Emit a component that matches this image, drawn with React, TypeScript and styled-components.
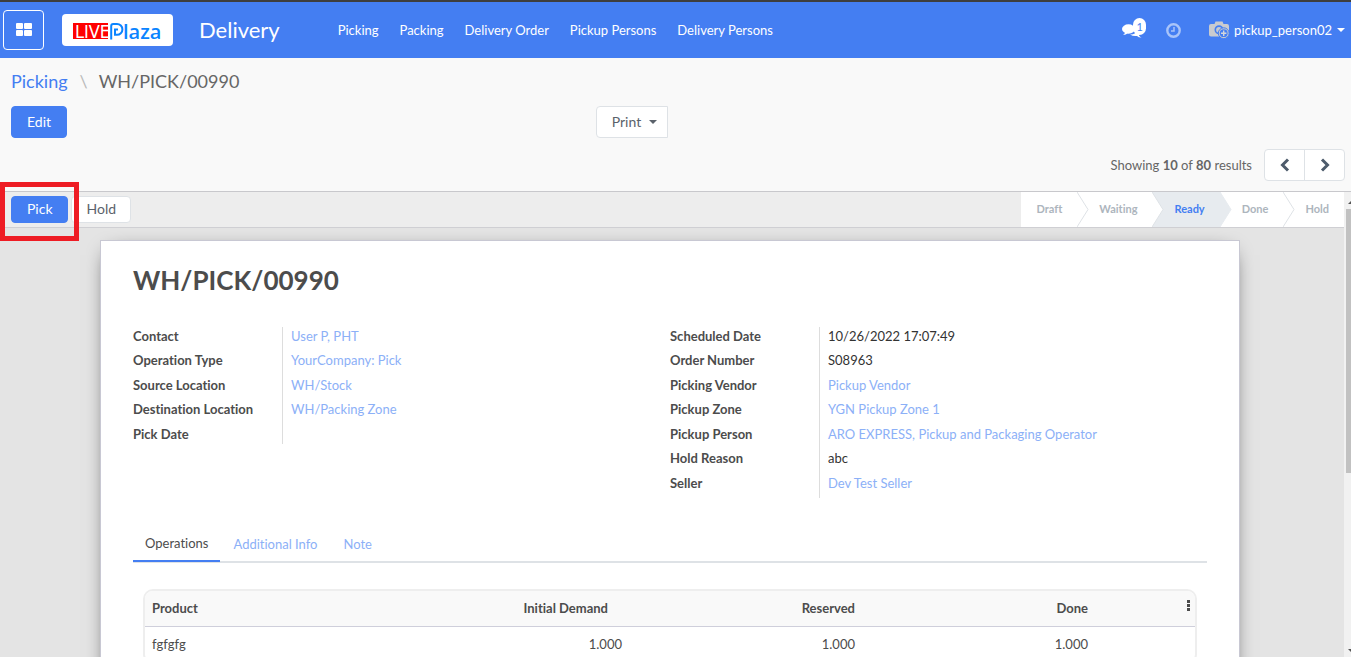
import React from "react";
import styled, { createGlobalStyle } from "styled-components";

const blue = "#447ef2";
const link = "#8cb0f7";

const Global = createGlobalStyle`
  *, *::before, *::after { box-sizing: border-box; }
  body { margin: 0; font: 13px/20px Lato, "Open Sans", sans-serif; font-variant-ligatures: none; color: #4c4c4c; background: #f9f9f9; overflow: hidden; }
  button { font: inherit; font-variant-ligatures: none; cursor: pointer; }
  a { text-decoration: none; color: inherit; }
  h1, ol, dl, dd { margin: 0; padding: 0; }
  ol { list-style: none; }
`;

const Page = styled.div`
  display: flex;
  flex-direction: column;
  height: 100vh;
`;

const Navbar = styled.header`
  display: flex;
  align-items: center;
  flex: none;
  height: 58px;
  padding: 0 6px 0 3px;
  border-top: 2px solid #3e3e3e;
  background: ${blue};
  color: #fff;
`;

const AppsButton = styled.button`
  display: flex;
  align-items: center;
  justify-content: center;
  width: 41px;
  height: 40px;
  padding: 0;
  border: 1px solid #fff;
  border-radius: 4px;
  background: transparent;
`;

const LogoLink = styled.a`
  display: flex;
  margin-left: 18px;
  border-radius: 4px;
  background: #fff;
`;

const Brand = styled.a`
  margin-left: 26px;
  font-size: 22px;
  line-height: 28px;
`;

const Menu = styled.nav`
  display: flex;
  gap: 21px;
  margin-left: 58px;
`;

const Systray = styled.div`
  display: flex;
  align-items: center;
  margin-left: auto;
`;

const TrayButton = styled.button<{ $gap?: number }>`
  display: flex;
  align-items: center;
  position: relative;
  margin: 0 0 0 ${(p) => p.$gap ?? 0}px;
  padding: 0;
  border: 0;
  background: transparent;
  color: #fff;
`;

const UserName = styled.span`
  margin-left: 4px;
`;

const Count = styled.span`
  position: absolute;
  top: -5px;
  right: 0;
  width: 13px;
  height: 17px;
  border-radius: 7px;
  background: #fff;
  color: ${blue};
  font-size: 11px;
  line-height: 17px;
  text-align: center;
`;

const Caret = styled.span<{ $color: string }>`
  margin-left: 5px;
  border: 4px solid transparent;
  border-top-color: ${(p) => p.$color};
  border-bottom: 0;
`;

const ControlPanel = styled.section`
  flex: none;
  padding: 11px 6px 10px 11px;
  border-bottom: 1px solid #c8c8cc;
`;

const Breadcrumb = styled.ol`
  display: flex;
  font-size: 18px;
  line-height: 24px;
  color: #666;
`;

const Crumb = styled.li`
  a { color: ${blue}; }
  & + &::before { content: "\\\\"; padding: 0 11px 0 12px; color: #bbb; }
`;

const Actions = styled.div`
  display: grid;
  grid-template-columns: 7fr 9fr;
  column-gap: 2px;
  justify-items: start;
  margin-top: 13px;
`;

const Button = styled.button<{ $primary?: boolean; $small?: boolean }>`
  display: flex;
  align-items: center;
  height: ${(p) => (p.$small ? 27 : 32)}px;
  padding: ${(p) => (p.$small ? "0 14px 2px 15px" : "0 15px")};
  border: 1px solid ${(p) => (p.$primary ? blue : "#dee2e6")};
  border-radius: 4px;
  background: ${(p) => (p.$primary ? blue : "#fff")};
  color: ${(p) => (p.$primary ? "#fff" : "#5b626b")};
  font-size: 14px;
`;

const PrintButton = styled(Button)`
  gap: 3px;
  padding: 0 10px 0 15px;
  border-radius: 4px 0 0 4px;
`;

const Pager = styled.div`
  display: flex;
  justify-content: flex-end;
  align-items: center;
  margin-top: 11px;
  color: #666;
`;

const PagerButtons = styled.div`
  display: flex;
  margin-left: 12px;
  border: 1px solid #dee2e6;
  border-radius: 4px;
  background: #fff;
`;

const PagerButton = styled.button`
  display: flex;
  align-items: center;
  justify-content: center;
  width: 39px;
  height: 30px;
  padding: 0;
  border: 0;
  background: transparent;
  color: #4d5b6b;
  & + & { width: 40px; border-left: 1px solid #dee2e6; }
`;

const Content = styled.main`
  display: flex;
  flex: 1;
  min-height: 0;
`;

const FormView = styled.div`
  display: flex;
  flex-direction: column;
  flex: 1;
  min-width: 0;
`;

const SheetArea = styled.div`
  flex: 1;
  min-height: 0;
  overflow: hidden;
  background: #e4e4e4;
`;

const StatusBar = styled.div`
  display: flex;
  flex: none;
  justify-content: space-between;
  align-items: center;
  height: 36px;
  padding-left: 11px;
  border-bottom: 1px solid #cfcfd3;
  background: #ededed;
`;

const StatusButtons = styled.div`
  display: flex;
  gap: 3px;
  position: relative;
  z-index: 2;
`;

const Highlight = styled.div`
  position: absolute;
  top: -14px;
  left: -11px;
  width: 79px;
  height: 59px;
  border: 5px solid #ee1c24;
  pointer-events: none;
`;

const Steps = styled.ol`
  display: flex;
  align-self: stretch;
  background: #fff;
`;

const Step = styled.li<{ $current?: boolean }>`
  display: flex;
  align-items: center;
  position: relative;
  padding: 0 15px 2px;
  & + & { padding-left: 22px; }
  background: ${(p) => (p.$current ? "#e7ebef" : "#fff")};
  color: ${(p) => (p.$current ? blue : "#adb5bd")};
  font-size: 11px;
  font-weight: 700;
`;

const StepArrow = styled.svg`
  position: absolute;
  top: 0;
  left: 100%;
  z-index: 1;
`;

const Sheet = styled.article`
  margin: 12px 104px 0 100px;
  min-height: 600px;
  padding: 23px 32px;
  border: 1px solid #c8c8d3;
  background: #fff;
  box-shadow: 0 5px 20px -10px #000;
`;

const Title = styled.h1`
  font-size: 26px;
  line-height: 32px;
  font-weight: 700;
`;

const Groups = styled.div`
  display: grid;
  grid-template-columns: 1fr 1fr;
  align-items: start;
  margin-top: 31px;
`;

const Field = styled.div<{ $empty: boolean }>`
  display: grid;
  grid-template-columns: 150px 1fr;
  height: ${(p) => (p.$empty ? 19 : 24)}px;
  line-height: 19px;
  &:nth-child(even) { height: 25px; }
  dt { border-right: 1px solid #ddd; font-weight: 700; }
  dd { padding-left: 8px; color: #333; }
  dd a { color: ${link}; }
`;

const Tabs = styled.div`
  display: flex;
  height: 37px;
  margin-top: 28px;
  box-shadow: inset 0 -2px #dee2e6;
`;

const Tab = styled.button<{ $active?: boolean }>`
  height: 36px;
  padding: ${(p) => (p.$active ? "0 12px" : "2px 13px 0")};
  border: 0;
  border-bottom: 2px solid ${(p) => (p.$active ? blue : "transparent")};
  background: transparent;
  color: ${(p) => (p.$active ? "#4c4c4c" : link)};
`;

const TableFrame = styled.div`
  position: relative;
  margin: 26px 10px 0;
  border: 2px solid #eee;
  border-radius: 10px;
  overflow: hidden;
`;

const Table = styled.table`
  width: 100%;
  table-layout: fixed;
  border-collapse: collapse;
  th, td { height: 36px; padding: 0 9px; text-align: right; }
  th { height: 35px; background: #f9f9f9; border-bottom: 1px solid #cfcfdb; font-weight: 700; }
  th:first-child, td:first-child { padding-left: 7px; text-align: left; }
`;

const Col = styled.col<{ $width?: number }>`
  width: ${(p) => (p.$width ? p.$width + "px" : "auto")};
`;

const SortableHead = styled.th`
  && { padding-right: 23px; }
`;

const Options = styled.button`
  position: absolute;
  top: 9px;
  right: 4px;
  display: flex;
  padding: 0;
  border: 0;
  background: transparent;
`;

const Scrollbar = styled.div`
  display: flex;
  flex-direction: column;
  flex: none;
  width: 7px;
  padding: 9px 0 0 2px;
  background: #f1f1f1;
`;

const ScrollArrow = styled.svg`
  flex: none;
  align-self: flex-end;
`;

const Thumb = styled.div`
  height: 264px;
  margin: 5px 0 auto;
  background: #c1c1c1;
`;

const menu = ["Picking", "Packing", "Delivery Order", "Pickup Persons", "Delivery Persons"];
const steps = ["Draft", "Waiting", "Ready", "Done", "Hold"];

type FieldData = { label: string; value: string; linked?: boolean };

const leftFields: FieldData[] = [
  { label: "Contact", value: "User P, PHT", linked: true },
  { label: "Operation Type", value: "YourCompany: Pick", linked: true },
  { label: "Source Location", value: "WH/Stock", linked: true },
  { label: "Destination Location", value: "WH/Packing Zone", linked: true },
  { label: "Pick Date", value: "" },
];

const rightFields: FieldData[] = [
  { label: "Scheduled Date", value: "10/26/2022 17:07:49" },
  { label: "Order Number", value: "S08963" },
  { label: "Picking Vendor", value: "Pickup Vendor", linked: true },
  { label: "Pickup Zone", value: "YGN Pickup Zone 1", linked: true },
  { label: "Pickup Person", value: "ARO EXPRESS, Pickup and Packaging Operator", linked: true },
  { label: "Hold Reason", value: "abc" },
  { label: "Seller", value: "Dev Test Seller", linked: true },
];

function FieldGroup({ fields }: { fields: FieldData[] }) {
  return (
    <dl>
      {fields.map((f) => (
        <Field key={f.label} $empty={!f.value}>
          <dt>{f.label}</dt>
          <dd>{f.linked ? <a href="#record">{f.value}</a> : f.value}</dd>
        </Field>
      ))}
    </dl>
  );
}

function Logo() {
  return (
    <svg width="111" height="32" viewBox="0 0 111 32" role="img" aria-label="LIVE Plaza">
      <rect x="11" y="9" width="35" height="16" fill="#f00" />
      <text x="13" y="24" fill="#fff" fontFamily="Liberation Sans Narrow, DejaVu Sans Condensed, sans-serif" fontSize="18">LIVE</text>
      <path d="M49.200 25.500V12q0-2 2-2h3.800a5.300 5.300 0 0 1 0 10.800h-2V15.500h3" fill="none" stroke="#0a84ff" strokeWidth="2" />
      <text x="61" y="25" fill="#0a84ff" fontFamily="Open Sans, sans-serif" fontWeight="600" fontSize="20">laza</text>
    </svg>
  );
}

function Chevron({ d }: { d: string }) {
  return (
    <svg width="12" height="14" viewBox="0 0 12 14" fill="none" stroke="currentColor" strokeWidth="3">
      <path d={d} />
    </svg>
  );
}

export default function App() {
  return (
    <Page>
      <Global />
      <Navbar>
        <AppsButton aria-label="Applications">
          <svg width="16" height="14" viewBox="0 0 16 14" fill="#fff">
            <rect width="7" height="6" rx="1" />
            <rect x="8" width="8" height="6" rx="1" />
            <rect y="7" width="7" height="6" rx="1" />
            <rect x="8" y="7" width="8" height="6" rx="1" />
          </svg>
        </AppsButton>
        <LogoLink href="#home"><Logo /></LogoLink>
        <Brand href="#delivery">Delivery</Brand>
        <Menu>
          {menu.map((m) => <a key={m} href="#menu">{m}</a>)}
        </Menu>
        <Systray>
          <TrayButton aria-label="Messages">
            <svg width="24" height="15" viewBox="0 0 24 15" fill="#fff">
              <ellipse cx="6.500" cy="6" rx="6.500" ry="4.700" />
              <path d="M3 9q0 2-2 3 3 0 5-2zM8 11.500q5 .5 7-4h2v5q1 1.500 2.500 2-3 0-4.500-1.500-4 .5-7-1.500z" />
            </svg>
            <Count>1</Count>
          </TrayButton>
          <TrayButton $gap={20} aria-label="Activities">
            <svg width="15" height="15" viewBox="0 0 15 15" fill="none" stroke="#a9c4f9" strokeWidth="2.400">
              <circle cx="7.500" cy="7.500" r="6.200" />
              <path d="M8 4v4H5" strokeWidth="1.500" />
            </svg>
          </TrayButton>
          <TrayButton $gap={28}>
            <svg width="21" height="18" viewBox="0 0 21 18">
              <path d="M2 3h3.500l1-2.500h7l1 2.500H18a2 2 0 0 1 2 2v8.500a2 2 0 0 1-2 2H2a2 2 0 0 1-2-2V5a2 2 0 0 1 2-2z" fill="#c9cbcf" />
              <circle cx="10" cy="8.800" r="3.700" fill="none" stroke={blue} strokeWidth="1.600" />
              <circle cx="14.700" cy="12.200" r="5.400" fill="#c9cbcf" stroke={blue} strokeWidth="1" />
              <circle cx="14.700" cy="12.200" r="3.900" fill={blue} />
              <path d="M14.700 9.500v5.400M12 12.200h5.400" stroke="#d5d7da" strokeWidth="1.400" />
            </svg>
            <UserName>pickup_person02</UserName>
            <Caret $color="#fff" />
          </TrayButton>
        </Systray>
      </Navbar>

      <ControlPanel>
        <Breadcrumb>
          <Crumb><a href="#picking">Picking</a></Crumb>
          <Crumb>WH/PICK/00990</Crumb>
        </Breadcrumb>
        <Actions>
          <Button $primary>Edit</Button>
          <PrintButton>Print <Caret $color="#5b626b" /></PrintButton>
        </Actions>
        <Pager>
          <span>Showing <b>10</b> of <b>80</b> results</span>
          <PagerButtons>
            <PagerButton aria-label="Previous"><Chevron d="M9 1.500L3.500 7L9 12.500" /></PagerButton>
            <PagerButton aria-label="Next"><Chevron d="M3 1.500L8.500 7L3 12.500" /></PagerButton>
          </PagerButtons>
        </Pager>
      </ControlPanel>

      <Content>
        <FormView>
          <StatusBar>
            <StatusButtons>
              <Button $primary $small>Pick</Button>
              <Button $small>Hold</Button>
              <Highlight />
            </StatusButtons>
            <Steps>
              {steps.map((s, i) => (
                <Step key={s} $current={s === "Ready"}>
                  {s}
                  {i < steps.length - 1 && (
                    <StepArrow width="12" height="35" viewBox="0 0 12 35">
                      <path d="M0 0L11 17.500L0 35" fill={s === "Ready" ? "#e7ebef" : "#fff"} stroke={s === "Ready" ? "#e7ebef" : "#dee2e6"} />
                    </StepArrow>
                  )}
                </Step>
              ))}
            </Steps>
          </StatusBar>
          <SheetArea>
            <Sheet>
              <Title>WH/PICK/00990</Title>
              <Groups>
                <FieldGroup fields={leftFields} />
                <FieldGroup fields={rightFields} />
              </Groups>
              <Tabs role="tablist">
                <Tab role="tab" aria-selected $active>Operations</Tab>
                <Tab role="tab">Additional Info</Tab>
                <Tab role="tab">Note</Tab>
              </Tabs>
              <TableFrame>
                <Table>
                  <colgroup>
                    <Col />
                    <Col $width={233} />
                    <Col $width={233} />
                    <Col $width={233} />
                    <Col $width={98} />
                  </colgroup>
                  <thead>
                    <tr>
                      <th>Product</th>
                      <SortableHead>Initial Demand</SortableHead>
                      <th>Reserved</th>
                      <th>Done</th>
                      <th />
                    </tr>
                  </thead>
                  <tbody>
                    <tr>
                      <td>fgfgfg</td>
                      <td>1.000</td>
                      <td>1.000</td>
                      <td>1.000</td>
                      <td />
                    </tr>
                  </tbody>
                </Table>
                <Options aria-label="Optional columns">
                  <svg width="4" height="12" viewBox="0 0 4 12" fill="#4c4c4c">
                    <rect width="3" height="3" />
                    <rect y="4" width="3" height="3" />
                    <rect y="8" width="3" height="3" />
                  </svg>
                </Options>
              </TableFrame>
            </Sheet>
          </SheetArea>
        </FormView>
        <Scrollbar>
          <ScrollArrow width="3" height="3" viewBox="0 0 3 3" fill="#555"><path d="M0 3L3 0V3z" /></ScrollArrow>
          <Thumb />
          <ScrollArrow width="3" height="8" viewBox="0 0 3 8" fill="#555"><path d="M0 0H3V3z" /></ScrollArrow>
        </Scrollbar>
      </Content>
    </Page>
  );
}
